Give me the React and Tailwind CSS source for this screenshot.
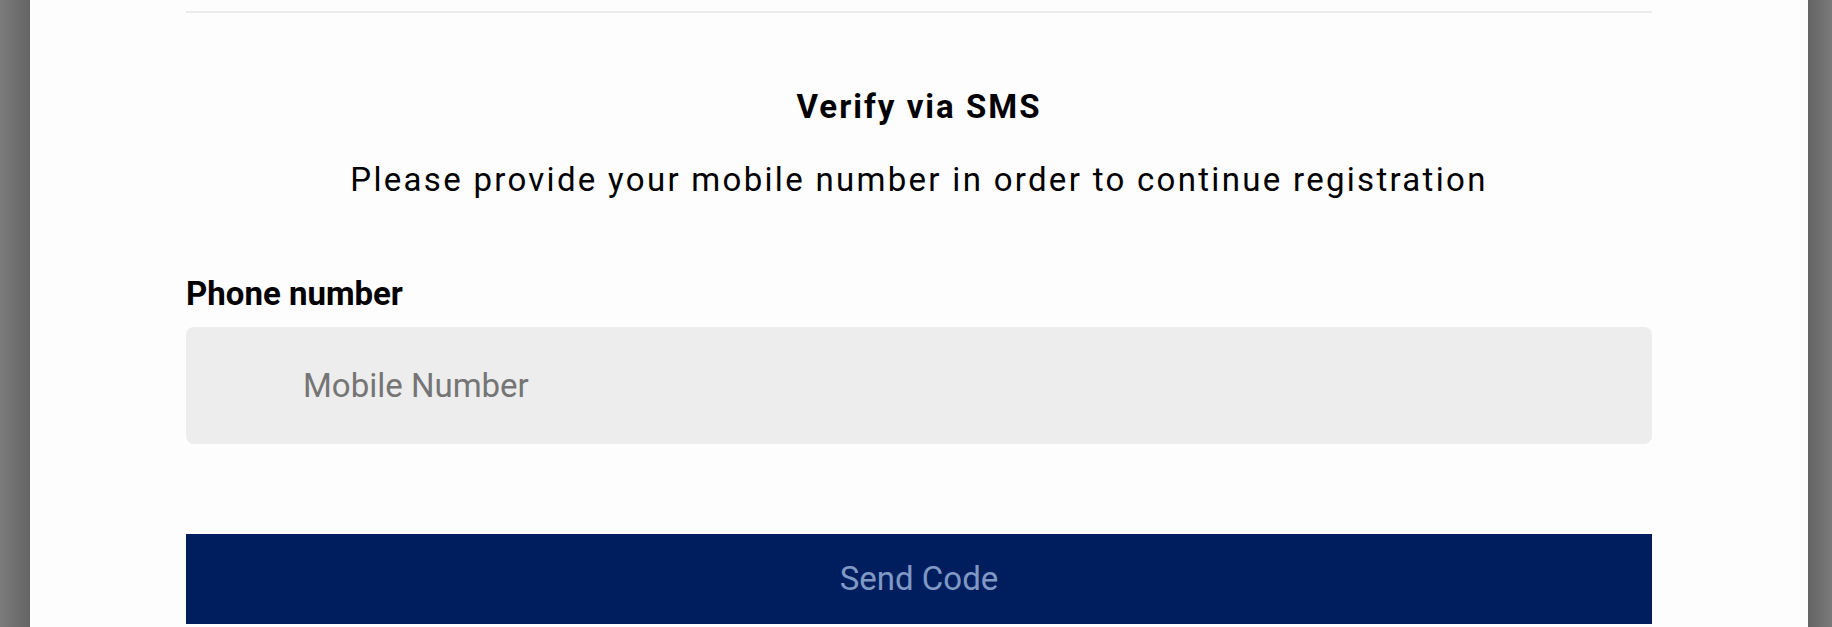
import React from "react";

const App = () => {
  return (
    <div className="h-[627px] w-full flex overflow-hidden font-['Roboto',sans-serif]">
      {/* Backdrop edges */}
      <div className="w-[30px] shrink-0 bg-gradient-to-r from-[#7b7b7b] to-[#646464]" />

      {/* Dialog body */}
      <div className="flex-1 bg-[#fdfdfd] flex justify-center">
        <div className="w-[1466px] flex flex-col">
          <div className="mt-[11px] h-[2px] bg-[#ebebeb]" />

          <h2 className="mt-[74px] text-center text-[33px] leading-[40px] font-bold tracking-[2px] text-black">
            Verify via SMS
          </h2>
          <p className="mt-[33px] text-center text-[33px] leading-[40px] tracking-[2.3px] text-black">
            Please provide your mobile number in order to continue registration
          </p>

          <label className="mt-[74px] text-[33px] leading-[40px] font-bold text-black">
            Phone number
          </label>
          <div className="mt-[13px] h-[117px] rounded-lg bg-[#ededed] flex items-center pl-[117px]">
            <input
              type="tel"
              placeholder="Mobile Number"
              className="w-full bg-transparent outline-none text-[33px] leading-[40px] text-black placeholder:text-[#757575]"
            />
          </div>

          <button className="mt-[90px] h-[90px] bg-[#001e5e] text-[#7f98c4] text-[33px] leading-[40px] flex items-center justify-center">
            Send Code
          </button>
        </div>
      </div>

      <div className="w-[24px] shrink-0 bg-gradient-to-r from-[#646464] to-[#7a7a7a]" />
    </div>
  );
};

export default App;
